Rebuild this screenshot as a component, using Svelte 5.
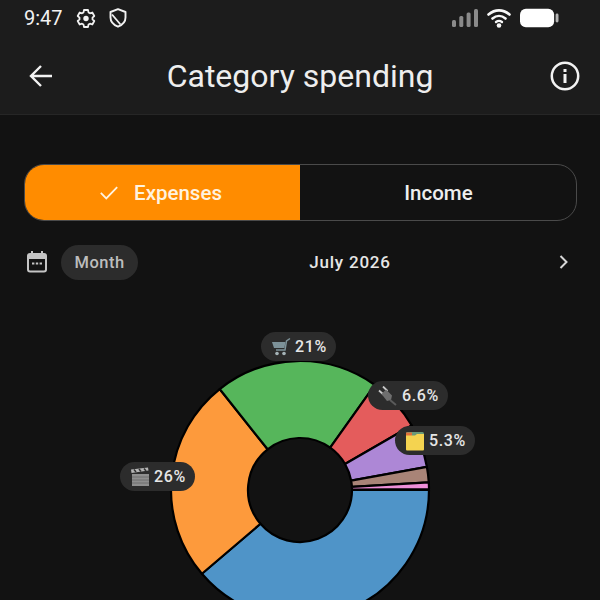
<script>
    const cx = 300;
    const cy = 190;
    const outer = 129;
    const inner = 52;

    // angles in degrees, clockwise from 3 o'clock
    const slices = [
        { from: 0, to: 139.5, color: '#4f94c8' },
        { from: 139.5, to: 231.5, color: '#fd9a3c' },
        { from: 231.5, to: 305.5, color: '#56b65b' },
        { from: 305.5, to: 330, color: '#e45c5c' },
        { from: 330, to: 349.7, color: '#ad87d6' },
        { from: 349.7, to: 356.6, color: '#a98477' },
        { from: 356.6, to: 359.6, color: '#ee8fd8' }
    ];

    function point(r, deg) {
        const a = (deg * Math.PI) / 180;
        return `${(cx + r * Math.cos(a)).toFixed(2)} ${(cy + r * Math.sin(a)).toFixed(2)}`;
    }

    function arc(s) {
        const large = s.to - s.from > 180 ? 1 : 0;
        return `M${point(outer, s.from)} A${outer} ${outer} 0 ${large} 1 ${point(outer, s.to)} L${point(inner, s.to)} A${inner} ${inner} 0 ${large} 0 ${point(inner, s.from)} Z`;
    }
</script>

<div class="screen">
    <header class="top">
        <div class="status">
            <div class="status-left">
                <span class="time">9:47</span>
                <svg class="gear" viewBox="0 0 20 20" width="20" height="20">
                    <path d="M8 2h4l.5 2.400 1.500.900 2.300-.800 2 3.500-1.800 1.600v1.800l1.800 1.600-2 3.500-2.300-.800-1.500.900L12 19H8l-.5-2.400-1.500-.900-2.300.800-2-3.500 1.800-1.600V9.600L1.700 8l2-3.500 2.300.800 1.500-.900z" fill="none" stroke="#f2f2f2" stroke-width="1.800" stroke-linejoin="round" />
                    <circle cx="10" cy="10.500" r="2.700" fill="#f2f2f2" />
                </svg>
                <svg class="shield" viewBox="0 0 18 20" width="18" height="20">
                    <path d="M9 1.200 16.500 4v5.500c0 4.300-3.200 7.500-7.500 9.200-4.300-1.700-7.500-4.900-7.500-9.200V4z" fill="none" stroke="#f2f2f2" stroke-width="1.900" stroke-linejoin="round" />
                    <path d="M3 6.500 11.500 16.500" fill="none" stroke="#f2f2f2" stroke-width="1.800" />
                </svg>
            </div>
            <div class="status-right">
                <svg viewBox="0 0 26 18" width="26" height="18">
                    <rect x="0" y="11" width="4" height="7" rx="1.500" fill="#8a8a8a" />
                    <rect x="7.300" y="7" width="4" height="11" rx="1.500" fill="#8a8a8a" />
                    <rect x="14.600" y="3.500" width="4" height="14.500" rx="1.500" fill="#8a8a8a" />
                    <rect x="22" y="0" width="4" height="18" rx="1.500" fill="#8a8a8a" />
                </svg>
                <svg viewBox="0 0 24 20" width="24" height="20">
                    <path d="M1.500 6.500C8 1 16 1 22.500 6.500M5.500 10.500c4-3.400 9-3.400 13 0" fill="none" stroke="#f8f8f8" stroke-width="2.600" stroke-linecap="round" />
                    <path d="M9 14c1.900-1.400 4.100-1.400 6 0" fill="none" stroke="#f8f8f8" stroke-width="2.400" stroke-linecap="round" />
                    <circle cx="12" cy="17.500" r="2.300" fill="#f8f8f8" />
                </svg>
                <svg viewBox="0 0 40 20" width="39" height="20">
                    <rect x="0" y="0.500" width="35" height="19" rx="6" fill="#fff" />
                    <rect x="36.500" y="5.500" width="3" height="9" rx="1.500" fill="#b5b5b5" />
                </svg>
            </div>
        </div>
        <div class="appbar">
            <svg viewBox="0 0 26 26" width="26" height="26">
                <path d="M24 13H3M13 3 3 13l10 10" fill="none" stroke="#f2f2f2" stroke-width="2.400" />
            </svg>
            <h1>Category spending</h1>
            <svg class="info" viewBox="0 0 30 30" width="30" height="30">
                <circle cx="15" cy="15" r="13.200" fill="none" stroke="#f2f2f2" stroke-width="2.500" />
                <rect x="13.500" y="13" width="3" height="9" fill="#f2f2f2" />
                <rect x="13.500" y="8" width="3" height="3" fill="#f2f2f2" />
            </svg>
        </div>
    </header>

    <main>
        <div class="segments">
            <div class="segment selected">
                <svg viewBox="0 0 22 18" width="20" height="17">
                    <path d="M2 9.500 8 15.500 20 3" fill="none" stroke="#fff3e0" stroke-width="2" />
                </svg>
                <span>Expenses</span>
            </div>
            <div class="segment">
                <span>Income</span>
            </div>
        </div>

        <div class="period">
            <svg viewBox="0 0 22 24" width="22" height="24">
                <path d="M6 1v4M16 1v4" stroke="#c4c4c4" stroke-width="2" />
                <rect x="2" y="4" width="18" height="17.500" rx="2" fill="none" stroke="#c4c4c4" stroke-width="2" />
                <rect x="2" y="4" width="18" height="5" fill="#c4c4c4" />
                <path d="M6 13.500h2.400M9.800 13.500h2.400M13.600 13.500H16" stroke="#c4c4c4" stroke-width="2" />
            </svg>
            <span class="chip">Month</span>
            <span class="month">July 2026</span>
            <svg class="next" viewBox="0 0 12 16" width="12" height="16">
                <path d="M2.500 2 8.500 8l-6 6" fill="none" stroke="#d6d6d6" stroke-width="2" />
            </svg>
        </div>

        <div class="chart">
            <svg viewBox="0 0 600 320" width="600" height="320">
                {#each slices as s}
                    <path d={arc(s)} fill={s.color} stroke="#000" stroke-width="2.200" stroke-linejoin="round" />
                {/each}
            </svg>

            <div class="tag cart">
                <svg viewBox="0 0 20 20" width="20" height="20">
                    <path d="M19 1.500 15.500 4 14 13H5" fill="none" stroke="#7d9299" stroke-width="1.500" />
                    <path d="M1 5h13.500L13.400 11H3z" fill="#7d9299" />
                    <circle cx="6" cy="16.500" r="1.800" fill="#a6b4b8" />
                    <circle cx="13" cy="16.500" r="1.800" fill="#a6b4b8" />
                </svg>
                <span>21%</span>
            </div>
            <div class="tag plug">
                <svg viewBox="0 0 20 20" width="20" height="20">
                    <path d="M1 4.500 6 9M5 0.500 9.500 5" stroke="#c9c9c9" stroke-width="1.800" />
                    <path d="M3.500 8 8 3.500l6 6-1 4.500-4 1z" fill="#6f6f6f" />
                    <path d="M12 14l6 5" stroke="#5a5a5a" stroke-width="2" />
                </svg>
                <span>6.6%</span>
            </div>
            <div class="tag folder">
                <svg viewBox="0 0 20 20" width="20" height="20">
                    <rect x="1" y="1" width="18" height="8" rx="1.500" fill="#6a9a78" />
                    <rect x="1" y="1.500" width="6" height="5" fill="#e0703a" />
                    <path d="M1 4.500h9l2-1.500h7v15.500a1 1 0 0 1-1 1H2a1 1 0 0 1-1-1z" fill="#f4d350" />
                </svg>
                <span>5.3%</span>
            </div>
            <div class="tag film">
                <svg viewBox="0 0 20 20" width="20" height="20">
                    <path d="M1 2.500 18 0.500l.5 3L1.500 6z" fill="#b5b5b5" />
                    <path d="M4 2.500l2 2.500M9 2l2 2.500M14 1.500l2 2.500" stroke="#333" stroke-width="1.500" />
                    <rect x="2" y="7" width="17" height="12" fill="#8f8f8f" />
                    <path d="M2 10h17M2 13h17M2 16h17" stroke="#6e6e6e" stroke-width="1" />
                </svg>
                <span>26%</span>
            </div>
        </div>
    </main>
</div>

<style>
    :global(body) {
        background: #121212;
    }

    .screen {
        width: 600px;
        height: 600px;
        overflow: hidden;
        font-family: Roboto, "Liberation Sans", sans-serif;
        color: #f2f2f2;
    }

    .top {
        height: 115px;
        background: #1c1c1c;
        border-bottom: 1px solid #262626;
        box-sizing: border-box;
    }

    .status {
        height: 36px;
        display: flex;
        justify-content: space-between;
        align-items: center;
        padding: 0 41px 2px 24px;
    }

    .status-left {
        display: flex;
        align-items: center;
    }

    .time {
        font-size: 20px;
        margin-right: 13px;
    }

    .shield {
        margin-left: 13px;
    }

    .status-right {
        display: flex;
        align-items: center;
        gap: 9px;
    }

    .appbar {
        height: 76px;
        display: grid;
        grid-template-columns: 1fr auto 1fr;
        align-items: center;
        padding: 0 20px 0 28px;
    }

    .appbar .info {
        justify-self: end;
    }

    h1 {
        margin: 0;
        font-size: 32px;
        font-weight: 400;
        color: #eeeeee;
        transform: translateX(-4px);
    }

    main {
        padding: 49px 23px 0 24px;
    }

    .segments {
        display: flex;
        height: 57px;
        box-sizing: border-box;
        border: 1.500px solid #4a4a4a;
        border-radius: 20px;
        overflow: hidden;
    }

    .segment {
        flex: 1;
        display: flex;
        align-items: center;
        justify-content: center;
        gap: 15px;
        font-size: 20.500px;
        font-weight: 500;
        color: #eeeeee;
    }

    .selected {
        background: #ff8c00;
        color: #fff3e0;
        margin-right: 1px;
    }

    .selected svg {
        margin-left: -4px;
    }

    .period {
        height: 36px;
        margin-top: 23px;
        display: flex;
        align-items: center;
        padding-left: 2px;
    }

    .chip {
        margin-left: 13px;
        padding: 0 13.500px;
        height: 35px;
        display: flex;
        align-items: center;
        border-radius: 18px;
        background: #2c2c2c;
        color: #bdbdbd;
        font-size: 16.500px;
        font-weight: 500;
        letter-spacing: 0.500px;
    }

    .month {
        margin-left: 171px;
        font-size: 17px;
        font-weight: 500;
        letter-spacing: 0.800px;
        color: #e6e6e6;
    }

    .next {
        margin-left: auto;
        margin-right: 7px;
    }

    /* free canvas, the tags sit over the donut */
    .chart {
        position: relative;
        margin: 20px -23px 0 -24px;
        height: 320px;
    }

    .chart > svg {
        display: block;
    }

    .tag {
        position: absolute;
        height: 29px;
        display: flex;
        align-items: center;
        gap: 4px;
        padding: 0 9px 0 10px;
        box-sizing: border-box;
        border-radius: 15px;
        background: #2c2c2c;
        font-size: 16px;
        font-weight: 500;
        letter-spacing: 0.600px;
        color: #e6e6e6;
    }

    .cart {
        left: 261px;
        top: 32px;
    }

    .plug {
        left: 368px;
        top: 81px;
    }

    .folder {
        left: 395px;
        top: 126px;
    }

    .film {
        left: 120px;
        top: 162px;
    }
</style>
